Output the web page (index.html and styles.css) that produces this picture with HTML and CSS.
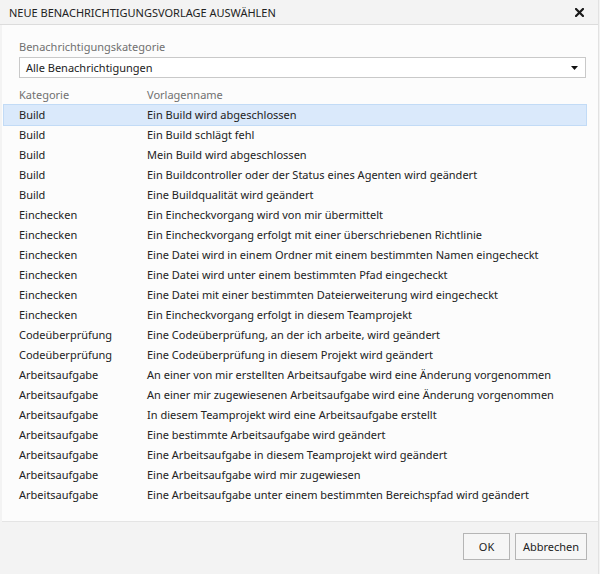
FILE: index.html
```html
<!DOCTYPE html>
<html lang="de">
<head>
<meta charset="utf-8">
<link rel="stylesheet" href="styles.css">
</head>
<body>
<div class="dialog">
  <div class="titlebar">
    <span class="title">NEUE BENACHRICHTIGUNGSVORLAGE AUSWÄHLEN</span>
    <svg class="close" width="9" height="9" viewBox="0 0 9 9"><path d="M1 1L8 8M8 1L1 8" stroke="#1a1a1a" stroke-width="2.2" stroke-linecap="square"/></svg>
  </div>
  <div class="content">
    <div class="field-label">Benachrichtigungskategorie</div>
    <div class="select">
      <span>Alle Benachrichtigungen</span>
      <svg class="caret" width="7" height="4" viewBox="0 0 7 4"><path d="M0 0H7L3.5 4Z" fill="#111"/></svg>
    </div>
    <div class="grid">
      <div class="row head"><span class="c1">Kategorie</span><span class="c2">Vorlagenname</span></div>
      <div class="row selected"><span class="c1">Build</span><span class="c2">Ein Build wird abgeschlossen</span></div>
      <div class="row"><span class="c1">Build</span><span class="c2">Ein Build schlägt fehl</span></div>
      <div class="row"><span class="c1">Build</span><span class="c2">Mein Build wird abgeschlossen</span></div>
      <div class="row"><span class="c1">Build</span><span class="c2">Ein Buildcontroller oder der Status eines Agenten wird geändert</span></div>
      <div class="row"><span class="c1">Build</span><span class="c2">Eine Buildqualität wird geändert</span></div>
      <div class="row"><span class="c1">Einchecken</span><span class="c2">Ein Eincheckvorgang wird von mir übermittelt</span></div>
      <div class="row"><span class="c1">Einchecken</span><span class="c2">Ein Eincheckvorgang erfolgt mit einer überschriebenen Richtlinie</span></div>
      <div class="row"><span class="c1">Einchecken</span><span class="c2">Eine Datei wird in einem Ordner mit einem bestimmten Namen eingecheckt</span></div>
      <div class="row"><span class="c1">Einchecken</span><span class="c2">Eine Datei wird unter einem bestimmten Pfad eingecheckt</span></div>
      <div class="row"><span class="c1">Einchecken</span><span class="c2">Eine Datei mit einer bestimmten Dateierweiterung wird eingecheckt</span></div>
      <div class="row"><span class="c1">Einchecken</span><span class="c2">Ein Eincheckvorgang erfolgt in diesem Teamprojekt</span></div>
      <div class="row"><span class="c1">Codeüberprüfung</span><span class="c2">Eine Codeüberprüfung, an der ich arbeite, wird geändert</span></div>
      <div class="row"><span class="c1">Codeüberprüfung</span><span class="c2">Eine Codeüberprüfung in diesem Projekt wird geändert</span></div>
      <div class="row"><span class="c1">Arbeitsaufgabe</span><span class="c2">An einer von mir erstellten Arbeitsaufgabe wird eine Änderung vorgenommen</span></div>
      <div class="row"><span class="c1">Arbeitsaufgabe</span><span class="c2">An einer mir zugewiesenen Arbeitsaufgabe wird eine Änderung vorgenommen</span></div>
      <div class="row"><span class="c1">Arbeitsaufgabe</span><span class="c2">In diesem Teamprojekt wird eine Arbeitsaufgabe erstellt</span></div>
      <div class="row"><span class="c1">Arbeitsaufgabe</span><span class="c2">Eine bestimmte Arbeitsaufgabe wird geändert</span></div>
      <div class="row"><span class="c1">Arbeitsaufgabe</span><span class="c2">Eine Arbeitsaufgabe in diesem Teamprojekt wird geändert</span></div>
      <div class="row"><span class="c1">Arbeitsaufgabe</span><span class="c2">Eine Arbeitsaufgabe wird mir zugewiesen</span></div>
      <div class="row"><span class="c1">Arbeitsaufgabe</span><span class="c2">Eine Arbeitsaufgabe unter einem bestimmten Bereichspfad wird geändert</span></div>
    </div>
  </div>
  <div class="footer">
    <button class="btn ok">OK</button>
    <button class="btn cancel">Abbrechen</button>
  </div>
</div>
</body>
</html>
```
FILE: styles.css
```css
html, body {
  margin: 0;
  padding: 0;
  background: #f3f3f3;
}
body {
  font-family: "Noto Sans", "Open Sans", sans-serif;
  font-size: 11px;
  color: #222;
}
.dialog {
  width: 598px;
  height: 574px;
  border-right: 1px solid #e2e2e2;
  display: flex;
  flex-direction: column;
  background: #f3f3f3;
}
.titlebar {
  height: 25px;
  box-sizing: border-box;
  border-bottom: 1px solid #dcdcdc;
  display: flex;
  align-items: center;
  justify-content: space-between;
  padding: 0 14px 0 9px;
  background: #f3f3f3;
}
.title {
  color: #222;
  font-size: 11px;
}
.close {
  display: block;
}
.content {
  background: #fcfcfc;
  margin-left: 2px;
  height: 497px;
  border-bottom: 1px solid #e4e4e4;
  padding-top: 13px;
  box-sizing: border-box;
}
.field-label {
  color: #707070;
  margin-left: 17px;
  height: 18px;
  line-height: 18px;
}
.select {
  margin: 1px 0 0 17px;
  width: 567px;
  height: 21px;
  box-sizing: border-box;
  border: 1px solid #c9c9c9;
  background: #fff;
  display: flex;
  align-items: center;
  justify-content: space-between;
  padding: 0 7px 0 6px;
}
.caret {
  display: block;
}
.grid {
  margin-top: 7px;
}
.row {
  display: flex;
  height: 20px;
  line-height: 20px;
  margin-left: 2px;
  width: 582px;
  box-sizing: border-box;
}
.row.head {
  color: #707070;
}
.row.selected {
  background: #dae9fb;
  outline: 1px solid #c2dbf6;
}
.c1 {
  width: 143px;
  padding-left: 15px;
  box-sizing: border-box;
  flex: none;
}
.c2 {
  white-space: nowrap;
}
.footer {
  flex: 1;
  display: flex;
  justify-content: flex-end;
  align-items: flex-start;
  gap: 5px;
  padding: 11px 11px 0 0;
}
.btn {
  font-family: inherit;
  font-size: 11px;
  color: #222;
  height: 27px;
  border: 1px solid #b5b5b5;
  background: #f6f6f6;
  padding: 0;
  border-radius: 0;
}
.btn.ok {
  width: 47px;
}
.btn.cancel {
  width: 72px;
}
```
